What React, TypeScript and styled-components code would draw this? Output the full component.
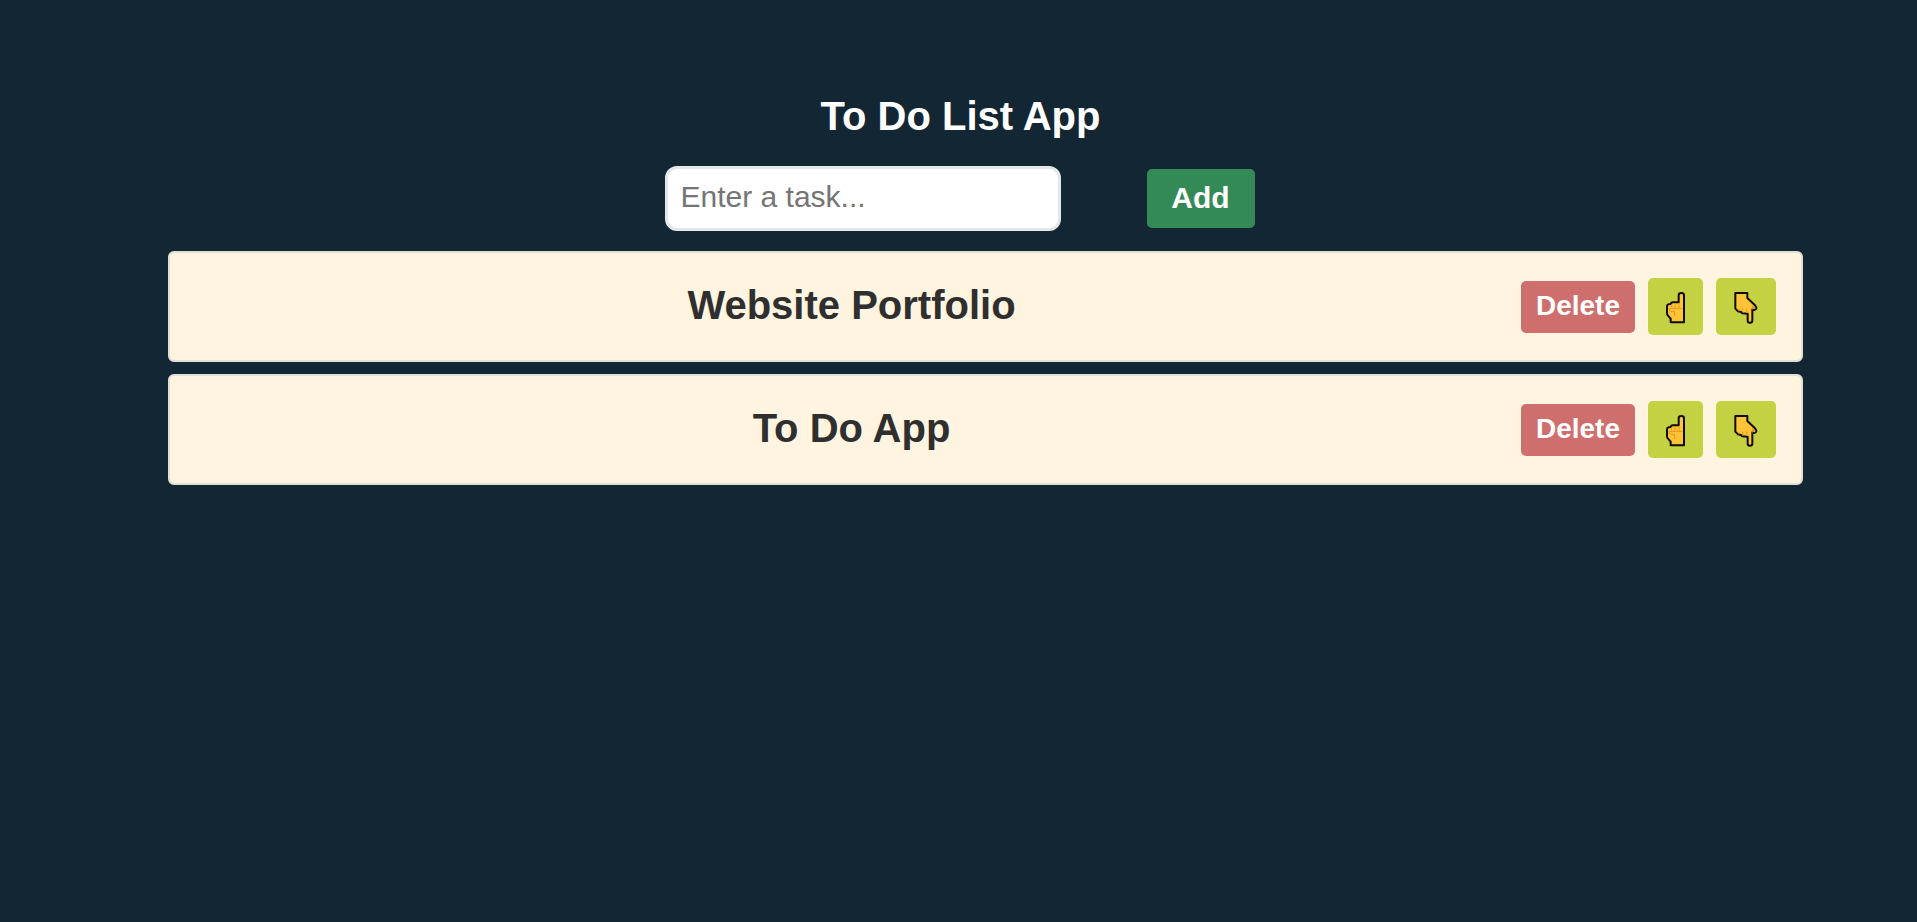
import React, { useState } from "react";
import styled, { createGlobalStyle } from "styled-components";

const GlobalStyle = createGlobalStyle`
  body {
    margin: 0;
    background: #132633;
    font-family: "Liberation Sans", Arial, Helvetica, sans-serif;
  }
`;

const Page = styled.main`
  padding: 93px 114px 40px 118px;
`;

const Title = styled.h1`
  margin: 0;
  font-size: 40px;
  line-height: 46px;
  text-align: center;
  color: #ffffff;
`;

const TaskForm = styled.form`
  display: flex;
  justify-content: center;
  align-items: center;
  gap: 86px;
  margin: 27px 2px 20px 0;
`;

const TaskInput = styled.input`
  box-sizing: border-box;
  width: 396px;
  height: 65px;
  padding: 0 13px 3px;
  border: 3px solid #e4e6e9;
  border-radius: 12px;
  background: #ffffff;
  color: #2f2f2f;
  font-family: inherit;
  font-size: 30px;

  &::placeholder {
    color: #757575;
  }
`;

const Button = styled.button`
  padding: 0 0 2px;
  border: none;
  border-radius: 5px;
  color: #ffffff;
  font-family: inherit;
  font-weight: bold;
  cursor: pointer;
`;

const AddButton = styled(Button)`
  width: 108px;
  height: 59px;
  background: #348a57;
  font-size: 30px;
`;

const DeleteButton = styled(Button)`
  width: 114px;
  height: 52px;
  background: #cf6f6d;
  font-size: 28px;
`;

const MoveButton = styled(Button)<{ $width: number }>`
  display: flex;
  align-items: center;
  justify-content: center;
  width: ${({ $width }) => $width}px;
  height: 57px;
  padding: 3px 0 0;
  background: #c4d142;
`;

const TaskList = styled.ol`
  display: flex;
  flex-direction: column;
  gap: 12px;
  margin: 0;
  padding: 0 0 0 50px;
  list-style: none;
`;

const TaskRow = styled.li`
  display: flex;
  align-items: center;
  gap: 13px;
  padding: 25px;
  border: 2px solid #e2dfd6;
  border-radius: 6px;
  background: #fff4e0;
`;

const TaskName = styled.span`
  flex: 1;
  padding-bottom: 3px;
  font-size: 40px;
  font-weight: bold;
  line-height: 46px;
  text-align: center;
  color: #2f2f2f;
`;

const HandUp = () => (
  <svg width="19" height="32" viewBox="0 0 57 96" aria-hidden="true">
    <path
      d="M14 91V80L6 71Q3 68 3 63V43Q3 38 8 37L14 36Q15 31 21 31H38V10Q38 3 46 3Q54 3 54 10V91Z"
      fill="#ffc338"
      stroke="#0c0b05"
      strokeWidth="6"
      strokeLinejoin="round"
    />
    <path
      d="M17 36V47M27 34V47M39 33V47M8 49H50M9 50Q9 59 18 59H26V72"
      fill="none"
      stroke="#e19a1d"
      strokeWidth="3"
    />
  </svg>
);

const HandDown = () => (
  <svg width="24" height="32" viewBox="0 0 72 96" aria-hidden="true">
    <path
      d="M4 3H40V18L63 40Q69 46 66 51Q62 56 55 52V86Q55 92 48 92Q41 92 41 86V65L25 64L21 60L12 58L4 50Z"
      fill="#ffc338"
      stroke="#0c0b05"
      strokeWidth="6"
      strokeLinejoin="round"
    />
    <path
      d="M15 50V58M26 49V61M38 49V63M55 43V53"
      fill="none"
      stroke="#e19a1d"
      strokeWidth="3"
    />
    <path d="M54 40L64 48L55 50Z" fill="#e58e12" />
  </svg>
);

export default function App() {
  const [tasks, setTasks] = useState(["Website Portfolio", "To Do App"]);
  const [draft, setDraft] = useState("");

  const addTask = (event: React.FormEvent) => {
    event.preventDefault();
    if (draft.trim()) {
      setTasks([...tasks, draft.trim()]);
      setDraft("");
    }
  };

  const removeTask = (index: number) =>
    setTasks(tasks.filter((_, i) => i !== index));

  const moveTask = (from: number, to: number) => {
    if (to < 0 || to >= tasks.length) return;
    const next = [...tasks];
    [next[from], next[to]] = [next[to], next[from]];
    setTasks(next);
  };

  return (
    <>
      <GlobalStyle />
      <Page>
        <Title>To Do List App</Title>
        <TaskForm onSubmit={addTask}>
          <TaskInput
            type="text"
            aria-label="Task"
            placeholder="Enter a task..."
            value={draft}
            onChange={(event) => setDraft(event.target.value)}
          />
          <AddButton type="submit">Add</AddButton>
        </TaskForm>
        <TaskList>
          {tasks.map((task, index) => (
            <TaskRow key={task + index}>
              <TaskName>{task}</TaskName>
              <DeleteButton type="button" onClick={() => removeTask(index)}>
                Delete
              </DeleteButton>
              <MoveButton
                type="button"
                $width={55}
                aria-label="Move up"
                onClick={() => moveTask(index, index - 1)}
              >
                <HandUp />
              </MoveButton>
              <MoveButton
                type="button"
                $width={60}
                aria-label="Move down"
                onClick={() => moveTask(index, index + 1)}
              >
                <HandDown />
              </MoveButton>
            </TaskRow>
          ))}
        </TaskList>
      </Page>
    </>
  );
}
